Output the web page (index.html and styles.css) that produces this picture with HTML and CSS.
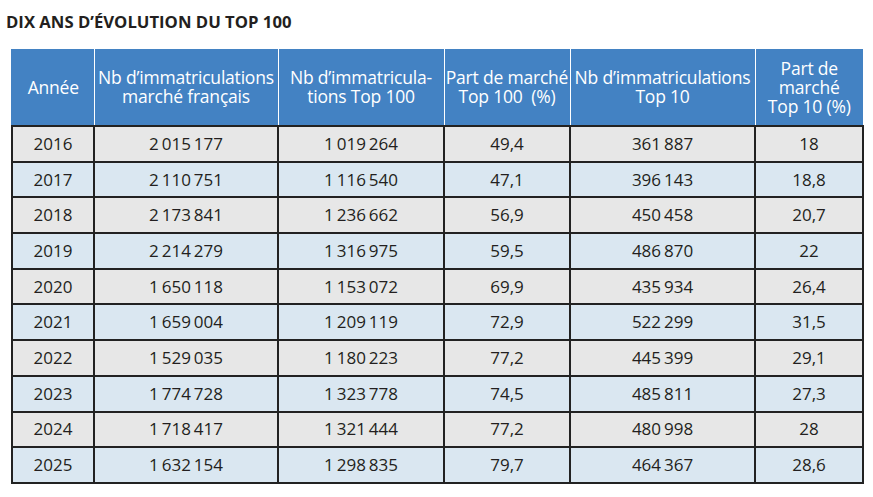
FILE: index.html
```html
<!DOCTYPE html>
<html lang="fr">
<head>
<meta charset="utf-8">
<link rel="stylesheet" href="styles.css">
</head>
<body>
<h1 class="title">DIX ANS D’ÉVOLUTION DU TOP 100</h1>
<table class="data">
<colgroup>
<col class="c1"><col class="c2"><col class="c3"><col class="c4"><col class="c5"><col class="c6">
</colgroup>
<thead>
<tr>
<th>Année</th>
<th>Nb d’immatriculations<br>marché français</th>
<th>Nb d’immatricula-<br>tions Top 100</th>
<th>Part de marché<br>Top 100&nbsp; (%)</th>
<th>Nb d’immatriculations<br>Top 10</th>
<th>Part de<br>marché<br>Top 10 (%)</th>
</tr>
</thead>
<tbody>
<tr><td>2016</td><td>2 015 177</td><td>1 019 264</td><td>49,4</td><td>361 887</td><td>18</td></tr>
<tr><td>2017</td><td>2 110 751</td><td>1 116 540</td><td>47,1</td><td>396 143</td><td>18,8</td></tr>
<tr><td>2018</td><td>2 173 841</td><td>1 236 662</td><td>56,9</td><td>450 458</td><td>20,7</td></tr>
<tr><td>2019</td><td>2 214 279</td><td>1 316 975</td><td>59,5</td><td>486 870</td><td>22</td></tr>
<tr><td>2020</td><td>1 650 118</td><td>1 153 072</td><td>69,9</td><td>435 934</td><td>26,4</td></tr>
<tr><td>2021</td><td>1 659 004</td><td>1 209 119</td><td>72,9</td><td>522 299</td><td>31,5</td></tr>
<tr><td>2022</td><td>1 529 035</td><td>1 180 223</td><td>77,2</td><td>445 399</td><td>29,1</td></tr>
<tr><td>2023</td><td>1 774 728</td><td>1 323 778</td><td>74,5</td><td>485 811</td><td>27,3</td></tr>
<tr><td>2024</td><td>1 718 417</td><td>1 321 444</td><td>77,2</td><td>480 998</td><td>28</td></tr>
<tr><td>2025</td><td>1 632 154</td><td>1 298 835</td><td>79,7</td><td>464 367</td><td>28,6</td></tr>
</tbody>
</table>
</body>
</html>
```
FILE: styles.css
```css
html, body {
  margin: 0;
  padding: 0;
  background: #ffffff;
}
body {
  font-family: "Open Sans", "Liberation Sans", sans-serif;
  color: #222222;
}
.title {
  margin: 0;
  padding: 12px 0 0 6px;
  height: 36px;
  box-sizing: border-box;
  font-family: "Open Sans", "Liberation Sans", sans-serif;
  font-weight: 700;
  font-size: 16.7px;
  line-height: 20px;
  color: #231f20;
}
.data {
  margin: 13px 0 0 11px;
  border-collapse: collapse;
  table-layout: fixed;
  width: 851px;
}
.c1 { width: 82px; }
.c2 { width: 184px; }
.c3 { width: 166px; }
.c4 { width: 126px; }
.c5 { width: 185px; }
.c6 { width: 108px; }
.data th {
  background: #4382c3;
  color: #ffffff;
  font-weight: 400;
  font-size: 17.5px;
  line-height: 19px;
  height: 76px;
  padding: 0;
  text-align: center;
  vertical-align: middle;
  border-left: 1.5px solid #ffffff;
  border-bottom: 2px solid #222222;
  letter-spacing: -0.2px;
  white-space: nowrap;
}
.data th:first-child {
  border-left: 2px solid #4382c3;
}
.data td {
  font-size: 17px;
  line-height: 20px;
  height: 33.7px;
  padding: 0;
  text-align: center;
  vertical-align: middle;
  border: 2px solid #222222;
  border-top: 0;
  color: #231f20;
  word-spacing: -1.5px;
}
.data tbody tr:nth-child(odd) td {
  background: #e7e7e7;
}
.data tbody tr:nth-child(even) td {
  background: #dae7f1;
}
```
